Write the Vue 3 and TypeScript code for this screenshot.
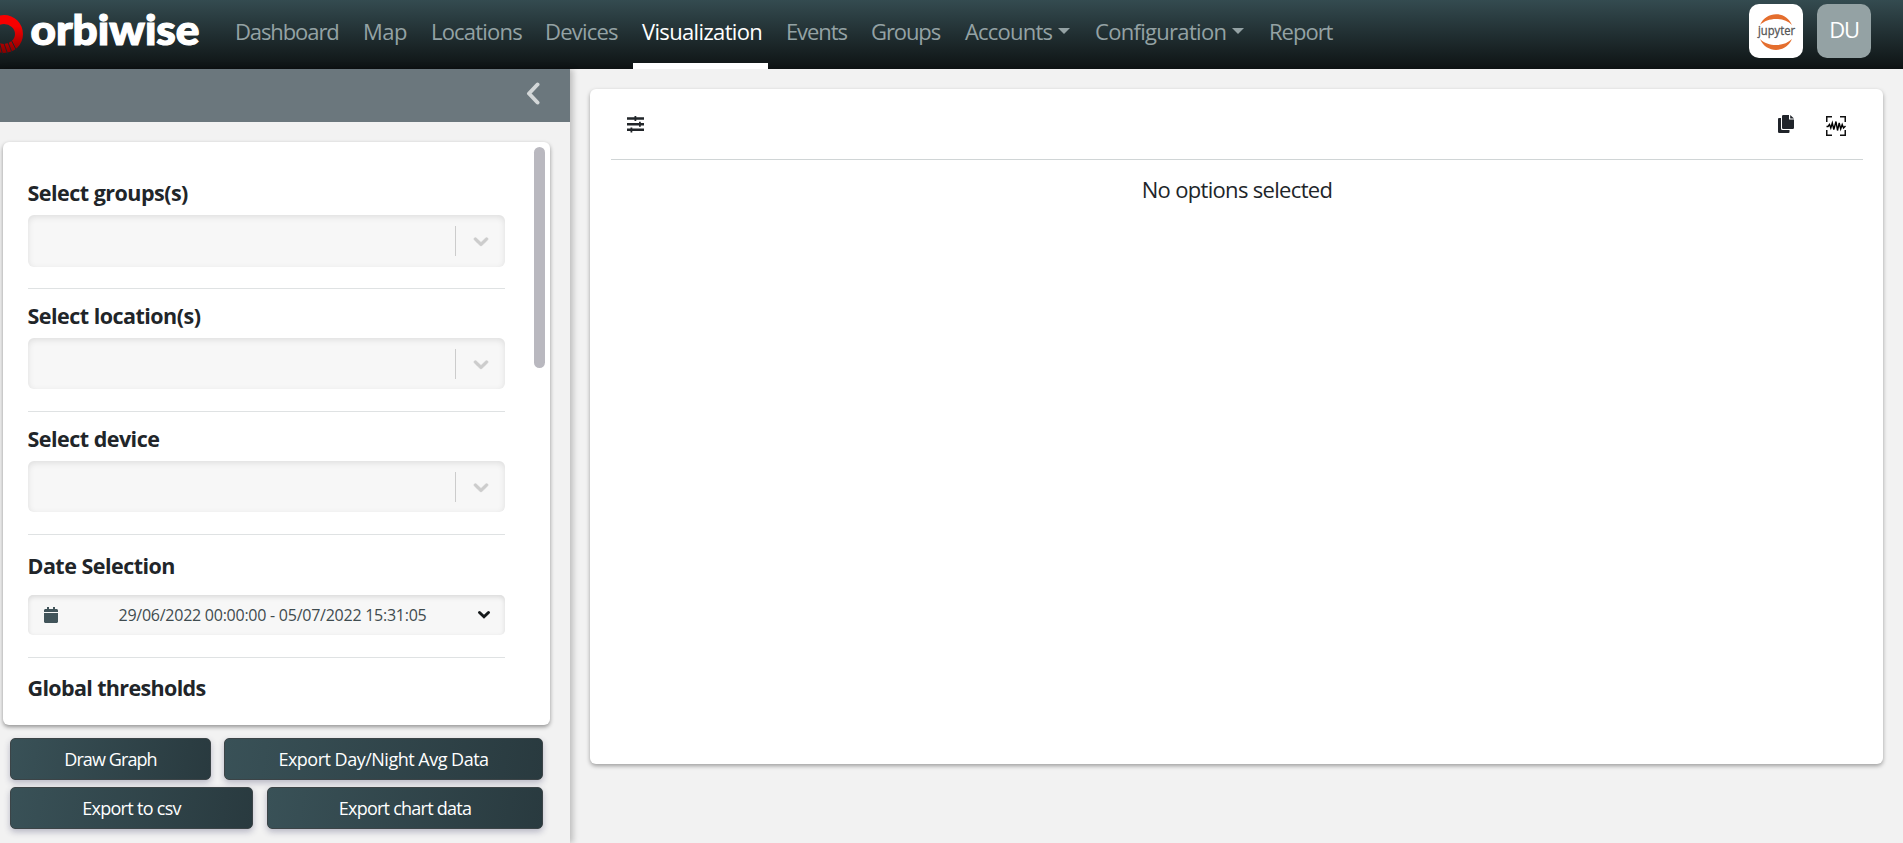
<script setup lang="ts">
import { ref } from 'vue'

interface NavItem {
  label: string
  key: string
  caret?: boolean
}

const active = ref('visualization')
const navItems: NavItem[] = [
  { label: 'Dashboard', key: 'dashboard' },
  { label: 'Map', key: 'map' },
  { label: 'Locations', key: 'locations' },
  { label: 'Devices', key: 'devices' },
  { label: 'Visualization', key: 'visualization' },
  { label: 'Events', key: 'events' },
  { label: 'Groups', key: 'groups' },
  { label: 'Accounts', key: 'accounts', caret: true },
  { label: 'Configuration', key: 'configuration', caret: true },
  { label: 'Report', key: 'report' },
]

const selects = ['Select groups(s)', 'Select location(s)', 'Select device']
const actions = [
  { label: 'Draw Graph', key: 'draw' },
  { label: 'Export Day/Night Avg Data', key: 'avg' },
  { label: 'Export to csv', key: 'csv' },
  { label: 'Export chart data', key: 'chart-data' },
]
</script>

<template>
  <div class="app">
    <header class="topbar">
      <svg class="logo" width="210" height="69" viewBox="0 0 210 69">
        <defs>
          <linearGradient id="ring" x1="0" y1="0" x2="0" y2="1">
            <stop offset="0.3" stop-color="#f80000" />
            <stop offset="1" stop-color="#850000" />
          </linearGradient>
        </defs>
        <path d="M4 15A19 19 0 1 1 4 53A19 19 0 1 1 4 15ZM4 24A11 10 0 1 0 4 44A11 10 0 1 0 4 24Z" fill="url(#ring)" fill-rule="evenodd" />
        <path d="M-.5 43l3 11M4 43.500l3.500 10M8 42.500l4 10M11.500 40.500l5 10" stroke="#1b2629" stroke-width="1" />
        <text x="30.500" y="44.500" textLength="169" lengthAdjust="spacingAndGlyphs" class="wordmark">orbiwise</text>
      </svg>
      <nav class="nav">
        <a v-for="item in navItems" :key="item.key" :class="['nav-item', item.key, { active: item.key === active }]">
          <span>{{ item.label }}</span><i v-if="item.caret" class="caret" />
        </a>
      </nav>
      <div class="account">
        <div class="tile jupyter">
          <svg width="54" height="54" viewBox="0 0 54 54">
            <path d="M11 21C17 6.500 37 6.500 43 21C35 13 19 13 11 21ZM11 35C17 49.500 37 49.500 43 35C35 43 19 43 11 35Z" fill="#e46e2e" />
            <text x="9" y="31" textLength="37" lengthAdjust="spacingAndGlyphs" class="jupyter-text">jupyter</text>
          </svg>
        </div>
        <div class="tile user">DU</div>
      </div>
    </header>

    <div class="body">
      <aside class="sidebar">
        <div class="side-head">
          <svg width="16" height="24" viewBox="0 0 16 24"><path d="M12.500 3.500L4 12.500L12.500 21.500" fill="none" stroke="#d3d7d8" stroke-width="4" stroke-linecap="round" stroke-linejoin="round" /></svg>
        </div>
        <section class="options">
          <div class="fields">
            <div v-for="(label, i) in selects" :key="label" :class="['field', 'field-' + i]">
              <h2>{{ label }}</h2>
              <div class="select">
                <span class="divider" />
                <svg width="24" height="24" viewBox="0 0 20 20"><path d="M4.516 7.548c.436-.446 1.043-.481 1.576 0L10 11.295l3.908-3.747c.533-.481 1.141-.446 1.574 0 .436.445.408 1.197 0 1.615-.406.418-4.695 4.502-4.695 4.502a1.095 1.095 0 0 1-1.576 0S4.924 9.581 4.516 9.163s-.436-1.170 0-1.615z" fill="#ccc" stroke="#ccc" stroke-width=".6" /></svg>
              </div>
            </div>
            <div class="field date-field">
              <h2>Date Selection</h2>
              <div class="date">
                <svg class="calendar" width="14" height="16" viewBox="0 0 448 512" preserveAspectRatio="none"><path d="M0 464c0 26.500 21.500 48 48 48h352c26.500 0 48-21.500 48-48V192H0v272zM448 112c0-26.500-21.500-48-48-48h-48V12c0-7-5-12-12-12h-40c-7 0-12 5-12 12v52H160V12c0-7-5-12-12-12h-40c-7 0-12 5-12 12v52H48C21.500 64 0 85.500 0 112v48h448v-48z" fill="#41545a" /></svg>
                <span>29/06/2022 00:00:00 - 05/07/2022 15:31:05</span>
                <svg class="chev" width="14" height="10" viewBox="0 0 14 10"><path d="M2.500 2.500L7 6.800L11.500 2.500" fill="none" stroke="#15191b" stroke-width="3" stroke-linecap="round" /></svg>
              </div>
            </div>
            <h2 class="last">Global thresholds</h2>
          </div>
          <div class="thumb" />
        </section>
        <div class="actions">
          <button v-for="a in actions" :key="a.key" :class="a.key" type="button"><span>{{ a.label }}</span></button>
        </div>
      </aside>

      <main class="main">
        <section class="chart">
          <div class="toolbar">
            <svg class="sliders" width="17" height="17" viewBox="0 0 17 17" fill="#212529">
              <path d="M0 1.200H17V3.700H0ZM0 6.900H17V9.400H0ZM0 12.600H17V15.100H0Z" />
              <path d="M7.500 0H9.300V5.100H7.500ZM12 5.700H13.800V10.800H12ZM3.500 11.400H5.300V16.500H3.500Z" />
            </svg>
            <div class="tools">
              <svg class="copy" width="16" height="18" viewBox="0 0 16 18" fill="#20242a">
                <path d="M0 4Q0 3 1 3H3V13.500Q3 15 4.500 15H11.500V17Q11.500 18 10.500 18H1.200Q0 18 0 16.800Z" />
                <path d="M5.200 0H11V4.500H16V12.800Q16 14 14.800 14H5.200Q4 14 4 12.800V1.200Q4 0 5.200 0ZM12.200 0L16 3.600H12.200Z" />
              </svg>
              <svg class="wave" width="20" height="20" viewBox="0 0 20 20" fill="none" stroke="#111" stroke-width="1.500">
                <path d="M0.750 6V.75H6M14 .75H19.250V6M.75 14V19.250H6M14 19.250H19.250V14" />
                <path d="M0.500 10.500H2L3.500 8.500L4.800 12L6.300 7L7.800 13.500L10 5.500L11.500 14.500L13.200 7L14.700 13L16.200 8.500L17.500 12L19.500 10" stroke-width="1.400" stroke="#000" />
              </svg>
            </div>
          </div>
          <p class="empty">No options selected</p>
        </section>
      </main>
    </div>
  </div>
</template>

<style>
body { margin: 0; overflow: hidden; }
</style>

<style scoped>
* { box-sizing: border-box; }
.app { width: 1903px; height: 843px; overflow: hidden; background: #f2f2f2; color: #212529; font-family: "Open Sans", "Noto Sans", sans-serif; font-size: 22px; display: flex; flex-direction: column; }
.topbar { height: 69px; flex: none; display: flex; align-items: flex-start; background: linear-gradient(#344b50, #101617 94%, #0d1112); }
.logo { flex: none; width: 210px; }
.wordmark { font-family: Lato, sans-serif; font-weight: 900; font-size: 41px; fill: #fff; stroke: #fff; stroke-width: 1.2px; }
.nav { display: flex; height: 69px; margin-left: 16px; }
.nav-item { display: flex; align-items: center; height: 69px; padding: 0 0 2px 9px; color: #94a2a4; white-space: nowrap; letter-spacing: -.8px; border-bottom: 6px solid transparent; }
.nav-item.active { color: #fff; border-color: #fff; letter-spacing: -.65px; }
.dashboard { width: 128px; letter-spacing: -1.1px; }
.map { width: 68px; letter-spacing: -.5px; }
.locations { width: 114px; letter-spacing: -.8px; }
.devices { width: 97px; letter-spacing: -.8px; }
.visualization { width: 135px; }
.events { width: 85px; margin-left: 9px; letter-spacing: -1.1px; }
.groups { width: 94px; letter-spacing: -1.1px; }
.accounts { width: 130px; }
.configuration { width: 174px; letter-spacing: -.7px; }
.report { width: 82px; letter-spacing: -1px; }
.caret { width: 0; height: 0; margin: 1px 0 0 6px; border: 6.500px solid transparent; border-top-color: #94a2a4; border-bottom: 0; }
.account { display: flex; gap: 14px; margin: 4px 32px 0 auto; }
.tile { width: 54px; height: 54px; border-radius: 10px; overflow: hidden; }
.jupyter { background: #fff; }
.jupyter svg { display: block; }
.jupyter-text { font: 12px "Open Sans", sans-serif; fill: #555; stroke: #555; stroke-width: .3px; }
.user { background: #94a2a4; color: #fff; text-align: center; line-height: 51px; letter-spacing: -1.2px; }

.body { display: flex; flex: 1; }
.sidebar { width: 570px; flex: none; box-shadow: 3px 0 6px rgba(0, 0, 0, .22); }
.side-head { height: 53px; background: #6b777d; display: flex; justify-content: flex-end; padding: 12px 29px 0 0; }
.options { width: 547px; height: 583px; margin: 20px 0 0 3px; padding: 0 5px 0 25px; display: flex; justify-content: space-between; background: #fff; border-radius: 6px; box-shadow: 0 2px 4px rgba(0, 0, 0, .4); overflow: hidden; }
.fields { width: 477px; padding-top: 24px; }
.field { height: 123px; padding-top: 12px; border-bottom: 1px solid #dfe2e3; }
h2 { margin: 0 0 0 -.5px; font-size: 21.500px; line-height: 30px; font-weight: 700; letter-spacing: -.52px; white-space: nowrap; }
.select { height: 51px; margin-top: 7px; background: #f7f7f7; border-radius: 6px; box-shadow: inset 0 2px 6px rgba(0, 0, 0, .1); display: flex; justify-content: flex-end; align-items: center; padding-right: 12px; }
.field-0 .select { height: 52px; }
.divider { width: 1px; height: 30px; background: #ccc; margin-right: 13px; }
.date-field { padding-top: 16px; }
.date { height: 40px; margin-top: 14px; padding: 0 14px 0 16px; background: #f7f7f7; border-radius: 5px; box-shadow: inset 0 2px 5px rgba(0, 0, 0, .12); display: flex; align-items: center; justify-content: space-between; font-size: 16px; letter-spacing: -.25px; color: #3f4b4f; white-space: nowrap; }
.date span { margin: 0 0 0 10px; }
.last { margin-top: 15px; letter-spacing: -.65px; }
.thumb { width: 11px; height: 221px; margin-top: 5px; border-radius: 6px; background: #b9b8bf; }
.actions { display: flex; flex-wrap: wrap; justify-content: space-between; gap: 7px 0; width: 533px; margin: 13px 0 0 10px; }
button { height: 42px; padding: 0 0 1px; border: 1px solid #3c4447; border-radius: 5px; background: linear-gradient(100deg, #395157, #293a3f); color: #fff; font: 18px "Open Sans", sans-serif; letter-spacing: -.5px; box-shadow: 0 3px 6px rgba(50, 50, 93, .3); white-space: nowrap; }
.draw { width: 201px; letter-spacing: -.9px; }
.avg { width: 319px; }
.csv { width: 243px; letter-spacing: -.7px; }
.chart-data { width: 276px; letter-spacing: -.75px; }

.main { padding: 20px 0 0 20px; }
.chart { width: 1293px; height: 675px; padding: 0 20px 0 21px; background: #fff; border-radius: 6px; box-shadow: 0 2px 4px rgba(0, 0, 0, .35); }
.toolbar { height: 71px; border-bottom: 1px solid #d0d5d6; display: flex; justify-content: space-between; padding: 26px 17px 0 16px; }
.sliders { margin-top: 1px; }
.tools { display: flex; gap: 32px; }
.wave { margin-top: 1px; }
.empty { margin: 13px 0 0; text-align: center; line-height: 32px; letter-spacing: -.68px; }
</style>
